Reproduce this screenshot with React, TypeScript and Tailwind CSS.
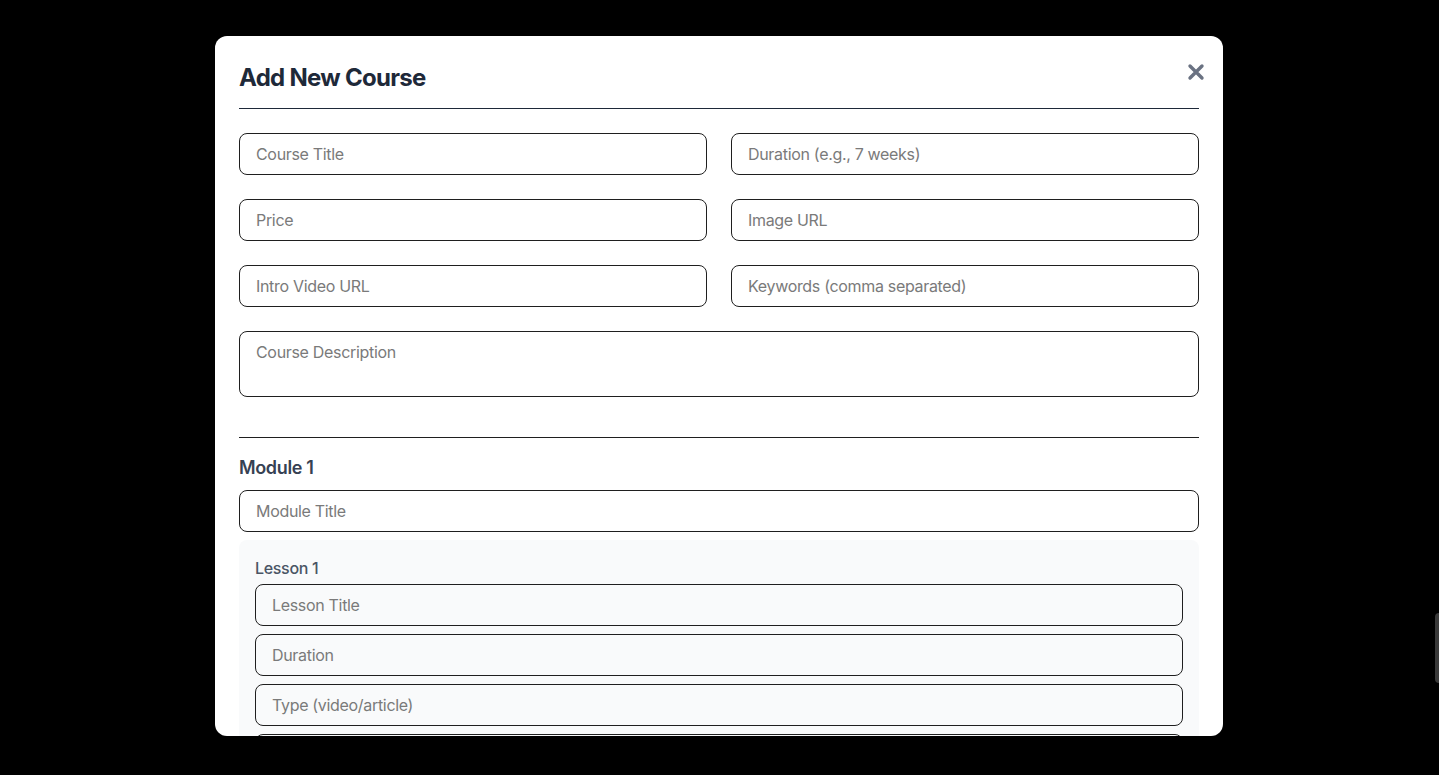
import { useState } from 'react';

const inputCls =
  'w-full rounded-lg border border-[#1f1f1f] bg-transparent px-4 py-2 text-base leading-6 tracking-[-0.02em] text-gray-900 placeholder:text-[#7a7a7a] focus:outline-none';

export default function App() {
  const [title, setTitle] = useState('');

  return (
    <div
      className="fixed inset-0 flex items-start justify-center bg-black pr-px pt-9"
      style={{ fontFamily: 'Inter, "Noto Sans", sans-serif' }}
    >
      <div className="h-[700px] w-[1008px] overflow-hidden rounded-xl bg-white p-6">
        {/* header */}
        <div className="flex items-center justify-between border-b border-gray-800 pb-3">
          <h2 className="text-2xl font-bold leading-9 tracking-[-0.03em] text-gray-800">Add New Course</h2>
          <button className="-mr-1.5 mb-3 text-gray-500" aria-label="Close">
            <svg width="18" height="18" viewBox="0 0 18 18" fill="none">
              <path d="M3 3L15 15M15 3L3 15" stroke="currentColor" strokeWidth="3.4" strokeLinecap="round" />
            </svg>
          </button>
        </div>

        <div className="mt-6 grid grid-cols-2 gap-6">
          <input className={inputCls} placeholder="Course Title" value={title} onChange={(e) => setTitle(e.target.value)} />
          <input className={inputCls} placeholder="Duration (e.g., 7 weeks)" />
          <input className={inputCls} placeholder="Price" />
          <input className={inputCls} placeholder="Image URL" />
          <input className={inputCls} placeholder="Intro Video URL" />
          <input className={inputCls} placeholder="Keywords (comma separated)" />
          <textarea className={`${inputCls} col-span-2 resize-none`} rows={2} placeholder="Course Description" />
        </div>

        {/* modules */}
        <div className="mt-10 border-t border-[#1f1f1f] pt-4">
          <h3 className="mb-2 text-lg font-semibold leading-7 tracking-[-0.02em] text-gray-700">Module 1</h3>
          <input className={inputCls} placeholder="Module Title" />
          <div className="mt-2 rounded-lg bg-gray-50 p-4">
            <h4 className="mb-1 text-base font-medium leading-6 tracking-[-0.02em] text-gray-600">Lesson 1</h4>
            <div className="flex flex-col gap-2">
              <input className={inputCls} placeholder="Lesson Title" />
              <input className={inputCls} placeholder="Duration" />
              <input className={inputCls} placeholder="Type (video/article)" />
              <input className={inputCls} placeholder="Content URL" />
              <textarea className={`${inputCls} resize-none`} rows={2} placeholder="Lesson Description" />
            </div>
          </div>
        </div>
      </div>

      {/* page scrollbar thumb peeking at the edge */}
      <div className="absolute right-0 top-[613px] h-[70px] w-[4px] rounded-l-full bg-[#3a3a3a]" />
    </div>
  );
}
